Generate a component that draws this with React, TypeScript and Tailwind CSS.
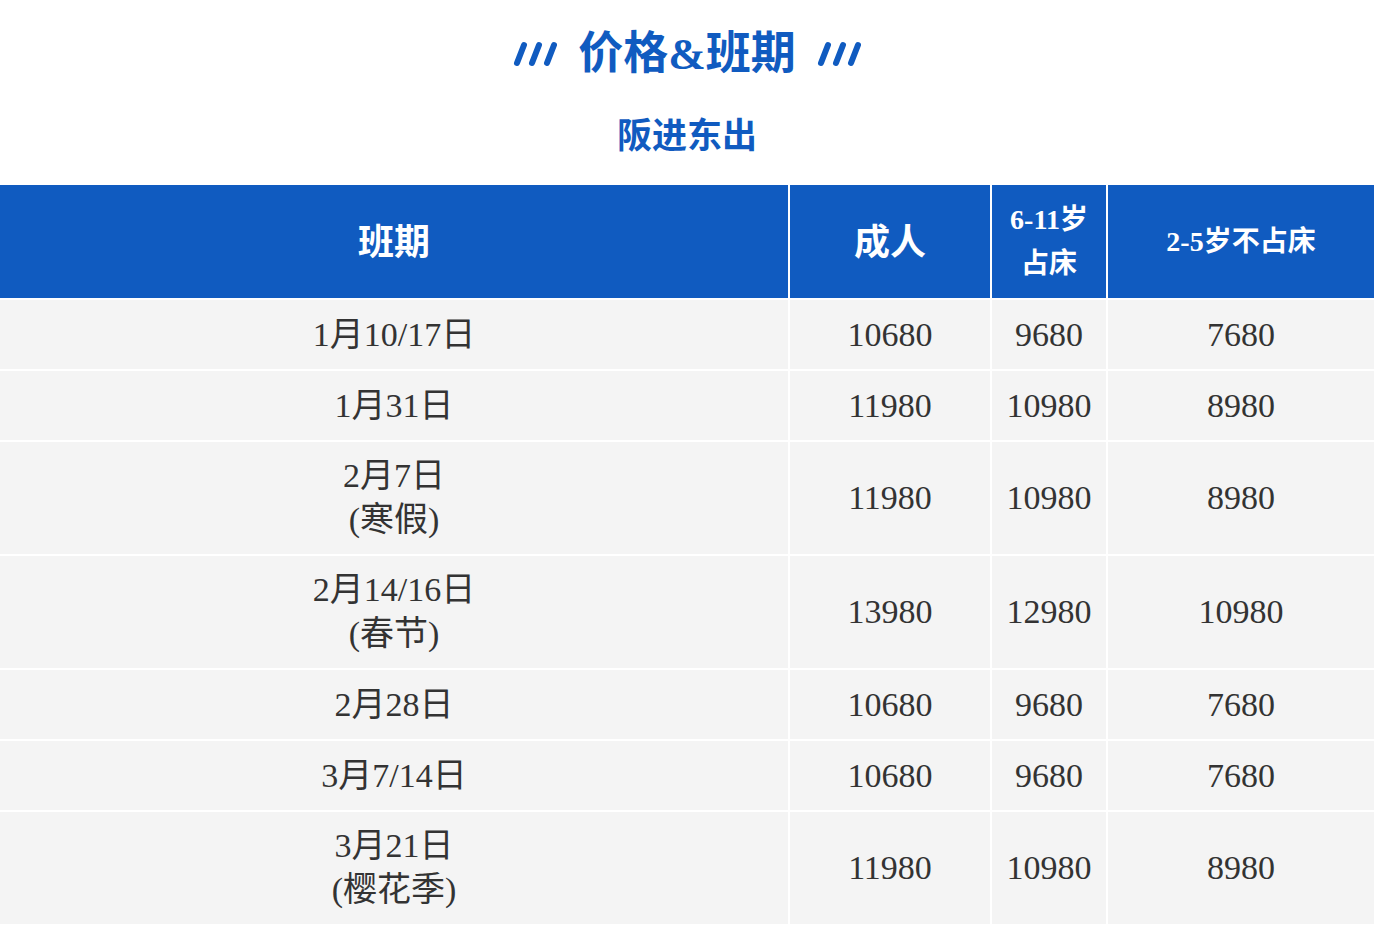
import React from "react";

const rows: { date: string[]; adult: string; child: string; small: string }[] = [
  { date: ["1月10/17日"], adult: "10680", child: "9680", small: "7680" },
  { date: ["1月31日"], adult: "11980", child: "10980", small: "8980" },
  { date: ["2月7日", "(寒假)"], adult: "11980", child: "10980", small: "8980" },
  { date: ["2月14/16日", "(春节)"], adult: "13980", child: "12980", small: "10980" },
  { date: ["2月28日"], adult: "10680", child: "9680", small: "7680" },
  { date: ["3月7/14日"], adult: "10680", child: "9680", small: "7680" },
  { date: ["3月21日", "(樱花季)"], adult: "11980", child: "10980", small: "8980" },
];

const Slashes = () => (
  <svg width="44" height="26" viewBox="0 0 44 26" className="shrink-0">
    {[0, 15, 30].map((x) => (
      <line
        key={x}
        x1={x + 11}
        y1={4}
        x2={x + 4}
        y2={22}
        stroke="#105bc0"
        strokeWidth={6}
        strokeLinecap="round"
      />
    ))}
  </svg>
);

const serif = "font-['Liberation_Serif','Noto_Sans_CJK_SC',serif]";

export default function App() {
  return (
    <div className="w-[1382px] h-[934px] bg-white overflow-hidden">
      <div className="w-[1374px]">
        <div className="flex items-center justify-center gap-[21px] pt-[26px] h-[82px]">
          <Slashes />
          <h1
            className={`${serif} text-[45px] leading-[54px] font-bold text-[#105bc0]`}
          >
            价格&amp;班期
          </h1>
          <Slashes />
        </div>
        <div className="flex justify-center h-[103px] pt-[30px]">
          <h2 className="font-['Noto_Sans_CJK_SC',sans-serif] text-[35px] leading-[42px] font-bold text-[#105bc0]">
            阪进东出
          </h2>
        </div>

        <div className="grid grid-cols-[788px_200px_114px_266px] gap-[2px]">
          <div className="h-[113px] pb-[5px] bg-[#105bc0] flex items-center justify-center font-['Noto_Sans_CJK_SC',sans-serif] text-[36px] font-bold text-white">
            班期
          </div>
          <div className="h-[113px] pb-[5px] bg-[#105bc0] flex items-center justify-center font-['Noto_Sans_CJK_SC',sans-serif] text-[36px] font-bold text-white">
            成人
          </div>
          <div
            className={`h-[113px] bg-[#105bc0] flex flex-col items-center justify-center ${serif} text-[28px] leading-[44px] font-bold text-white`}
          >
            <span>6-11岁</span>
            <span>占床</span>
          </div>
          <div
            className={`h-[113px] bg-[#105bc0] flex items-center justify-center ${serif} text-[28px] font-bold text-white`}
          >
            2-5岁不占床
          </div>

          {rows.map((r, i) => {
            const h = r.date.length > 1 ? "h-[112px]" : "h-[69px]";
            const cell = `${h} bg-[#f4f4f4] flex items-center justify-center ${serif} text-[34px] leading-[44px] text-[#333333]`;
            return (
              <React.Fragment key={i}>
                <div className={`${cell} flex-col`}>
                  {r.date.map((d) => (
                    <span key={d}>{d}</span>
                  ))}
                </div>
                <div className={cell}>{r.adult}</div>
                <div className={cell}>{r.child}</div>
                <div className={cell}>{r.small}</div>
              </React.Fragment>
            );
          })}
        </div>
      </div>
    </div>
  );
}
